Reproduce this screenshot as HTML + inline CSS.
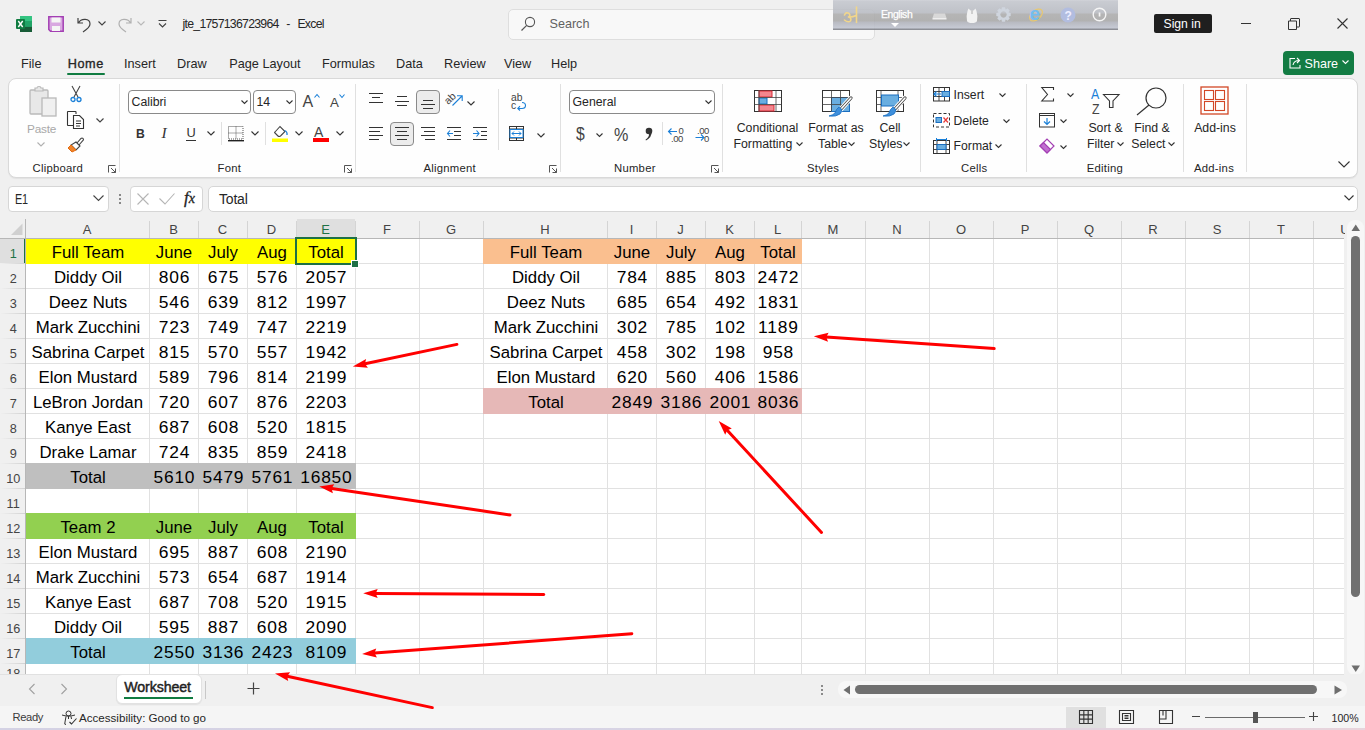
<!DOCTYPE html><html><head><meta charset="utf-8"><style>
html,body{margin:0;padding:0;}
body{width:1365px;height:730px;overflow:hidden;position:relative;background:#f0f0f0;font-family:"Liberation Sans", sans-serif;}
.t{position:absolute;white-space:pre;line-height:1;}
svg{overflow:visible}
</style></head><body>
<div style="position:absolute;left:26px;top:239px;width:1318px;height:435px;background:#fff"></div>
<div style="position:absolute;left:0px;top:219px;width:1344px;height:19px;background:#f0f0f0"></div>
<div style="position:absolute;left:0px;top:239px;width:25px;height:435px;background:#f0f0f0"></div>
<div style="position:absolute;left:149px;top:239px;width:1px;height:435px;background:#e1e1e1"></div>
<div style="position:absolute;left:198px;top:239px;width:1px;height:435px;background:#e1e1e1"></div>
<div style="position:absolute;left:247px;top:239px;width:1px;height:435px;background:#e1e1e1"></div>
<div style="position:absolute;left:296px;top:239px;width:1px;height:435px;background:#e1e1e1"></div>
<div style="position:absolute;left:355px;top:239px;width:1px;height:435px;background:#e1e1e1"></div>
<div style="position:absolute;left:419px;top:239px;width:1px;height:435px;background:#e1e1e1"></div>
<div style="position:absolute;left:483px;top:239px;width:1px;height:435px;background:#e1e1e1"></div>
<div style="position:absolute;left:607px;top:239px;width:1px;height:435px;background:#e1e1e1"></div>
<div style="position:absolute;left:656px;top:239px;width:1px;height:435px;background:#e1e1e1"></div>
<div style="position:absolute;left:705px;top:239px;width:1px;height:435px;background:#e1e1e1"></div>
<div style="position:absolute;left:754px;top:239px;width:1px;height:435px;background:#e1e1e1"></div>
<div style="position:absolute;left:801px;top:239px;width:1px;height:435px;background:#e1e1e1"></div>
<div style="position:absolute;left:865px;top:239px;width:1px;height:435px;background:#e1e1e1"></div>
<div style="position:absolute;left:929px;top:239px;width:1px;height:435px;background:#e1e1e1"></div>
<div style="position:absolute;left:993px;top:239px;width:1px;height:435px;background:#e1e1e1"></div>
<div style="position:absolute;left:1057px;top:239px;width:1px;height:435px;background:#e1e1e1"></div>
<div style="position:absolute;left:1121px;top:239px;width:1px;height:435px;background:#e1e1e1"></div>
<div style="position:absolute;left:1185px;top:239px;width:1px;height:435px;background:#e1e1e1"></div>
<div style="position:absolute;left:1249px;top:239px;width:1px;height:435px;background:#e1e1e1"></div>
<div style="position:absolute;left:1313px;top:239px;width:1px;height:435px;background:#e1e1e1"></div>
<div style="position:absolute;left:26px;top:263px;width:1318px;height:1px;background:#e1e1e1"></div>
<div style="position:absolute;left:26px;top:288px;width:1318px;height:1px;background:#e1e1e1"></div>
<div style="position:absolute;left:26px;top:313px;width:1318px;height:1px;background:#e1e1e1"></div>
<div style="position:absolute;left:26px;top:338px;width:1318px;height:1px;background:#e1e1e1"></div>
<div style="position:absolute;left:26px;top:363px;width:1318px;height:1px;background:#e1e1e1"></div>
<div style="position:absolute;left:26px;top:388px;width:1318px;height:1px;background:#e1e1e1"></div>
<div style="position:absolute;left:26px;top:413px;width:1318px;height:1px;background:#e1e1e1"></div>
<div style="position:absolute;left:26px;top:438px;width:1318px;height:1px;background:#e1e1e1"></div>
<div style="position:absolute;left:26px;top:463px;width:1318px;height:1px;background:#e1e1e1"></div>
<div style="position:absolute;left:26px;top:488px;width:1318px;height:1px;background:#e1e1e1"></div>
<div style="position:absolute;left:26px;top:513px;width:1318px;height:1px;background:#e1e1e1"></div>
<div style="position:absolute;left:26px;top:538px;width:1318px;height:1px;background:#e1e1e1"></div>
<div style="position:absolute;left:26px;top:563px;width:1318px;height:1px;background:#e1e1e1"></div>
<div style="position:absolute;left:26px;top:588px;width:1318px;height:1px;background:#e1e1e1"></div>
<div style="position:absolute;left:26px;top:613px;width:1318px;height:1px;background:#e1e1e1"></div>
<div style="position:absolute;left:26px;top:638px;width:1318px;height:1px;background:#e1e1e1"></div>
<div style="position:absolute;left:26px;top:663px;width:1318px;height:1px;background:#e1e1e1"></div>
<div style="position:absolute;left:25px;top:238px;width:331px;height:26px;background:#ffff00"></div>
<div style="position:absolute;left:25px;top:463px;width:331px;height:26px;background:#bfbfbf"></div>
<div style="position:absolute;left:25px;top:513px;width:331px;height:26px;background:#92d050"></div>
<div style="position:absolute;left:25px;top:638px;width:331px;height:26px;background:#92cddc"></div>
<div style="position:absolute;left:483px;top:238px;width:319px;height:26px;background:#fabf8f"></div>
<div style="position:absolute;left:483px;top:388px;width:319px;height:26px;background:#e6b8b7"></div>
<div style="position:absolute;left:149px;top:221px;width:1px;height:17px;background:#d4d4d4"></div>
<div style="position:absolute;left:198px;top:221px;width:1px;height:17px;background:#d4d4d4"></div>
<div style="position:absolute;left:247px;top:221px;width:1px;height:17px;background:#d4d4d4"></div>
<div style="position:absolute;left:296px;top:221px;width:1px;height:17px;background:#d4d4d4"></div>
<div style="position:absolute;left:355px;top:221px;width:1px;height:17px;background:#d4d4d4"></div>
<div style="position:absolute;left:419px;top:221px;width:1px;height:17px;background:#d4d4d4"></div>
<div style="position:absolute;left:483px;top:221px;width:1px;height:17px;background:#d4d4d4"></div>
<div style="position:absolute;left:607px;top:221px;width:1px;height:17px;background:#d4d4d4"></div>
<div style="position:absolute;left:656px;top:221px;width:1px;height:17px;background:#d4d4d4"></div>
<div style="position:absolute;left:705px;top:221px;width:1px;height:17px;background:#d4d4d4"></div>
<div style="position:absolute;left:754px;top:221px;width:1px;height:17px;background:#d4d4d4"></div>
<div style="position:absolute;left:801px;top:221px;width:1px;height:17px;background:#d4d4d4"></div>
<div style="position:absolute;left:865px;top:221px;width:1px;height:17px;background:#d4d4d4"></div>
<div style="position:absolute;left:929px;top:221px;width:1px;height:17px;background:#d4d4d4"></div>
<div style="position:absolute;left:993px;top:221px;width:1px;height:17px;background:#d4d4d4"></div>
<div style="position:absolute;left:1057px;top:221px;width:1px;height:17px;background:#d4d4d4"></div>
<div style="position:absolute;left:1121px;top:221px;width:1px;height:17px;background:#d4d4d4"></div>
<div style="position:absolute;left:1185px;top:221px;width:1px;height:17px;background:#d4d4d4"></div>
<div style="position:absolute;left:1249px;top:221px;width:1px;height:17px;background:#d4d4d4"></div>
<div style="position:absolute;left:1313px;top:221px;width:1px;height:17px;background:#d4d4d4"></div>
<div style="position:absolute;left:297px;top:219px;width:58px;height:19px;background:#dfdfdf"></div>
<div style="position:absolute;left:0px;top:239px;width:24px;height:24px;background:#dfdfdf"></div>
<div style="position:absolute;left:24px;top:239px;width:2px;height:25px;background:#1e7145"></div>
<div style="position:absolute;left:0px;top:238px;width:1344px;height:1px;background:#b7b7b7"></div>
<div style="position:absolute;left:25px;top:219px;width:1px;height:455px;background:#b7b7b7"></div>
<div style="position:absolute;left:0px;top:239px;width:25px;height:0px;"></div>
<div style="position:absolute;left:0px;top:263px;width:25px;height:1px;background:linear-gradient(to right,#f0f0f0,#d2d2d2)"></div>
<div style="position:absolute;left:0px;top:288px;width:25px;height:1px;background:linear-gradient(to right,#f0f0f0,#d2d2d2)"></div>
<div style="position:absolute;left:0px;top:313px;width:25px;height:1px;background:linear-gradient(to right,#f0f0f0,#d2d2d2)"></div>
<div style="position:absolute;left:0px;top:338px;width:25px;height:1px;background:linear-gradient(to right,#f0f0f0,#d2d2d2)"></div>
<div style="position:absolute;left:0px;top:363px;width:25px;height:1px;background:linear-gradient(to right,#f0f0f0,#d2d2d2)"></div>
<div style="position:absolute;left:0px;top:388px;width:25px;height:1px;background:linear-gradient(to right,#f0f0f0,#d2d2d2)"></div>
<div style="position:absolute;left:0px;top:413px;width:25px;height:1px;background:linear-gradient(to right,#f0f0f0,#d2d2d2)"></div>
<div style="position:absolute;left:0px;top:438px;width:25px;height:1px;background:linear-gradient(to right,#f0f0f0,#d2d2d2)"></div>
<div style="position:absolute;left:0px;top:463px;width:25px;height:1px;background:linear-gradient(to right,#f0f0f0,#d2d2d2)"></div>
<div style="position:absolute;left:0px;top:488px;width:25px;height:1px;background:linear-gradient(to right,#f0f0f0,#d2d2d2)"></div>
<div style="position:absolute;left:0px;top:513px;width:25px;height:1px;background:linear-gradient(to right,#f0f0f0,#d2d2d2)"></div>
<div style="position:absolute;left:0px;top:538px;width:25px;height:1px;background:linear-gradient(to right,#f0f0f0,#d2d2d2)"></div>
<div style="position:absolute;left:0px;top:563px;width:25px;height:1px;background:linear-gradient(to right,#f0f0f0,#d2d2d2)"></div>
<div style="position:absolute;left:0px;top:588px;width:25px;height:1px;background:linear-gradient(to right,#f0f0f0,#d2d2d2)"></div>
<div style="position:absolute;left:0px;top:613px;width:25px;height:1px;background:linear-gradient(to right,#f0f0f0,#d2d2d2)"></div>
<div style="position:absolute;left:0px;top:638px;width:25px;height:1px;background:linear-gradient(to right,#f0f0f0,#d2d2d2)"></div>
<div style="position:absolute;left:0px;top:663px;width:25px;height:1px;background:linear-gradient(to right,#f0f0f0,#d2d2d2)"></div>
<svg style="position:absolute;left:10px;top:223px;" width="13" height="13" viewBox="0 0 13 13"><path d="M12.5 0.5 L12.5 12 L1 12 Z" fill="#d0d0d0"/></svg>
<div class="t" style="left:-213.0px;width:600px;text-align:center;top:223.20px;font-size:13px;color:#444;font-weight:400;">A</div>
<div class="t" style="left:-126.5px;width:600px;text-align:center;top:223.20px;font-size:13px;color:#444;font-weight:400;">B</div>
<div class="t" style="left:-77.5px;width:600px;text-align:center;top:223.20px;font-size:13px;color:#444;font-weight:400;">C</div>
<div class="t" style="left:-28.5px;width:600px;text-align:center;top:223.20px;font-size:13px;color:#444;font-weight:400;">D</div>
<div class="t" style="left:25.5px;width:600px;text-align:center;top:223.20px;font-size:13px;color:#1e7145;font-weight:400;">E</div>
<div class="t" style="left:87.0px;width:600px;text-align:center;top:223.20px;font-size:13px;color:#444;font-weight:400;">F</div>
<div class="t" style="left:151.0px;width:600px;text-align:center;top:223.20px;font-size:13px;color:#444;font-weight:400;">G</div>
<div class="t" style="left:245.0px;width:600px;text-align:center;top:223.20px;font-size:13px;color:#444;font-weight:400;">H</div>
<div class="t" style="left:331.5px;width:600px;text-align:center;top:223.20px;font-size:13px;color:#444;font-weight:400;">I</div>
<div class="t" style="left:380.5px;width:600px;text-align:center;top:223.20px;font-size:13px;color:#444;font-weight:400;">J</div>
<div class="t" style="left:429.5px;width:600px;text-align:center;top:223.20px;font-size:13px;color:#444;font-weight:400;">K</div>
<div class="t" style="left:477.5px;width:600px;text-align:center;top:223.20px;font-size:13px;color:#444;font-weight:400;">L</div>
<div class="t" style="left:533.0px;width:600px;text-align:center;top:223.20px;font-size:13px;color:#444;font-weight:400;">M</div>
<div class="t" style="left:597.0px;width:600px;text-align:center;top:223.20px;font-size:13px;color:#444;font-weight:400;">N</div>
<div class="t" style="left:661.0px;width:600px;text-align:center;top:223.20px;font-size:13px;color:#444;font-weight:400;">O</div>
<div class="t" style="left:725.0px;width:600px;text-align:center;top:223.20px;font-size:13px;color:#444;font-weight:400;">P</div>
<div class="t" style="left:789.0px;width:600px;text-align:center;top:223.20px;font-size:13px;color:#444;font-weight:400;">Q</div>
<div class="t" style="left:853.0px;width:600px;text-align:center;top:223.20px;font-size:13px;color:#444;font-weight:400;">R</div>
<div class="t" style="left:917.0px;width:600px;text-align:center;top:223.20px;font-size:13px;color:#444;font-weight:400;">S</div>
<div class="t" style="left:981.0px;width:600px;text-align:center;top:223.20px;font-size:13px;color:#444;font-weight:400;">T</div>
<div class="t" style="left:1045.0px;width:600px;text-align:center;top:223.20px;font-size:13px;color:#444;font-weight:400;">U</div>
<div class="t" style="left:-286.8px;width:600px;text-align:center;top:247.75px;font-size:12.7px;color:#1e7145;font-weight:400;">1</div>
<div class="t" style="left:-286.8px;width:600px;text-align:center;top:272.75px;font-size:12.7px;color:#444;font-weight:400;">2</div>
<div class="t" style="left:-286.8px;width:600px;text-align:center;top:297.75px;font-size:12.7px;color:#444;font-weight:400;">3</div>
<div class="t" style="left:-286.8px;width:600px;text-align:center;top:322.75px;font-size:12.7px;color:#444;font-weight:400;">4</div>
<div class="t" style="left:-286.8px;width:600px;text-align:center;top:347.75px;font-size:12.7px;color:#444;font-weight:400;">5</div>
<div class="t" style="left:-286.8px;width:600px;text-align:center;top:372.75px;font-size:12.7px;color:#444;font-weight:400;">6</div>
<div class="t" style="left:-286.8px;width:600px;text-align:center;top:397.75px;font-size:12.7px;color:#444;font-weight:400;">7</div>
<div class="t" style="left:-286.8px;width:600px;text-align:center;top:422.75px;font-size:12.7px;color:#444;font-weight:400;">8</div>
<div class="t" style="left:-286.8px;width:600px;text-align:center;top:447.75px;font-size:12.7px;color:#444;font-weight:400;">9</div>
<div class="t" style="left:-286.8px;width:600px;text-align:center;top:472.75px;font-size:12.7px;color:#444;font-weight:400;">10</div>
<div class="t" style="left:-286.8px;width:600px;text-align:center;top:497.75px;font-size:12.7px;color:#444;font-weight:400;">11</div>
<div class="t" style="left:-286.8px;width:600px;text-align:center;top:522.75px;font-size:12.7px;color:#444;font-weight:400;">12</div>
<div class="t" style="left:-286.8px;width:600px;text-align:center;top:547.75px;font-size:12.7px;color:#444;font-weight:400;">13</div>
<div class="t" style="left:-286.8px;width:600px;text-align:center;top:572.75px;font-size:12.7px;color:#444;font-weight:400;">14</div>
<div class="t" style="left:-286.8px;width:600px;text-align:center;top:597.75px;font-size:12.7px;color:#444;font-weight:400;">15</div>
<div class="t" style="left:-286.8px;width:600px;text-align:center;top:622.75px;font-size:12.7px;color:#444;font-weight:400;">16</div>
<div class="t" style="left:-286.8px;width:600px;text-align:center;top:647.75px;font-size:12.7px;color:#444;font-weight:400;">17</div>
<div class="t" style="left:-286.8px;width:600px;text-align:center;top:668.25px;font-size:12.7px;color:#444;font-weight:400;">18</div>
<div class="t" style="left:-212.5px;width:600px;text-align:center;top:244.27px;font-size:17.4px;color:#000;font-weight:400;transform:scaleX(0.965);">Full Team</div>
<div class="t" style="left:-126.0px;width:600px;text-align:center;top:244.27px;font-size:17.4px;color:#000;font-weight:400;transform:scaleX(0.965);">June</div>
<div class="t" style="left:-77.0px;width:600px;text-align:center;top:244.27px;font-size:17.4px;color:#000;font-weight:400;transform:scaleX(0.965);">July</div>
<div class="t" style="left:-28.0px;width:600px;text-align:center;top:244.27px;font-size:17.4px;color:#000;font-weight:400;transform:scaleX(0.965);">Aug</div>
<div class="t" style="left:26.0px;width:600px;text-align:center;top:244.27px;font-size:17.4px;color:#000;font-weight:400;transform:scaleX(0.965);">Total</div>
<div class="t" style="left:-212.5px;width:600px;text-align:center;top:269.27px;font-size:17.4px;color:#000;font-weight:400;transform:scaleX(0.965);">Diddy Oil</div>
<div class="t" style="left:-125.6px;width:600px;text-align:center;top:269.27px;font-size:17.4px;color:#000;font-weight:400;letter-spacing:0.8px;">806</div>
<div class="t" style="left:-76.6px;width:600px;text-align:center;top:269.27px;font-size:17.4px;color:#000;font-weight:400;letter-spacing:0.8px;">675</div>
<div class="t" style="left:-27.600000000000023px;width:600px;text-align:center;top:269.27px;font-size:17.4px;color:#000;font-weight:400;letter-spacing:0.8px;">576</div>
<div class="t" style="left:26.399999999999977px;width:600px;text-align:center;top:269.27px;font-size:17.4px;color:#000;font-weight:400;letter-spacing:0.8px;">2057</div>
<div class="t" style="left:-212.5px;width:600px;text-align:center;top:294.27px;font-size:17.4px;color:#000;font-weight:400;transform:scaleX(0.965);">Deez Nuts</div>
<div class="t" style="left:-125.6px;width:600px;text-align:center;top:294.27px;font-size:17.4px;color:#000;font-weight:400;letter-spacing:0.8px;">546</div>
<div class="t" style="left:-76.6px;width:600px;text-align:center;top:294.27px;font-size:17.4px;color:#000;font-weight:400;letter-spacing:0.8px;">639</div>
<div class="t" style="left:-27.600000000000023px;width:600px;text-align:center;top:294.27px;font-size:17.4px;color:#000;font-weight:400;letter-spacing:0.8px;">812</div>
<div class="t" style="left:26.399999999999977px;width:600px;text-align:center;top:294.27px;font-size:17.4px;color:#000;font-weight:400;letter-spacing:0.8px;">1997</div>
<div class="t" style="left:-212.5px;width:600px;text-align:center;top:319.27px;font-size:17.4px;color:#000;font-weight:400;transform:scaleX(0.965);">Mark Zucchini</div>
<div class="t" style="left:-125.6px;width:600px;text-align:center;top:319.27px;font-size:17.4px;color:#000;font-weight:400;letter-spacing:0.8px;">723</div>
<div class="t" style="left:-76.6px;width:600px;text-align:center;top:319.27px;font-size:17.4px;color:#000;font-weight:400;letter-spacing:0.8px;">749</div>
<div class="t" style="left:-27.600000000000023px;width:600px;text-align:center;top:319.27px;font-size:17.4px;color:#000;font-weight:400;letter-spacing:0.8px;">747</div>
<div class="t" style="left:26.399999999999977px;width:600px;text-align:center;top:319.27px;font-size:17.4px;color:#000;font-weight:400;letter-spacing:0.8px;">2219</div>
<div class="t" style="left:-212.5px;width:600px;text-align:center;top:344.27px;font-size:17.4px;color:#000;font-weight:400;transform:scaleX(0.965);">Sabrina Carpet</div>
<div class="t" style="left:-125.6px;width:600px;text-align:center;top:344.27px;font-size:17.4px;color:#000;font-weight:400;letter-spacing:0.8px;">815</div>
<div class="t" style="left:-76.6px;width:600px;text-align:center;top:344.27px;font-size:17.4px;color:#000;font-weight:400;letter-spacing:0.8px;">570</div>
<div class="t" style="left:-27.600000000000023px;width:600px;text-align:center;top:344.27px;font-size:17.4px;color:#000;font-weight:400;letter-spacing:0.8px;">557</div>
<div class="t" style="left:26.399999999999977px;width:600px;text-align:center;top:344.27px;font-size:17.4px;color:#000;font-weight:400;letter-spacing:0.8px;">1942</div>
<div class="t" style="left:-212.5px;width:600px;text-align:center;top:369.27px;font-size:17.4px;color:#000;font-weight:400;transform:scaleX(0.965);">Elon Mustard</div>
<div class="t" style="left:-125.6px;width:600px;text-align:center;top:369.27px;font-size:17.4px;color:#000;font-weight:400;letter-spacing:0.8px;">589</div>
<div class="t" style="left:-76.6px;width:600px;text-align:center;top:369.27px;font-size:17.4px;color:#000;font-weight:400;letter-spacing:0.8px;">796</div>
<div class="t" style="left:-27.600000000000023px;width:600px;text-align:center;top:369.27px;font-size:17.4px;color:#000;font-weight:400;letter-spacing:0.8px;">814</div>
<div class="t" style="left:26.399999999999977px;width:600px;text-align:center;top:369.27px;font-size:17.4px;color:#000;font-weight:400;letter-spacing:0.8px;">2199</div>
<div class="t" style="left:-212.5px;width:600px;text-align:center;top:394.27px;font-size:17.4px;color:#000;font-weight:400;transform:scaleX(0.965);">LeBron Jordan</div>
<div class="t" style="left:-125.6px;width:600px;text-align:center;top:394.27px;font-size:17.4px;color:#000;font-weight:400;letter-spacing:0.8px;">720</div>
<div class="t" style="left:-76.6px;width:600px;text-align:center;top:394.27px;font-size:17.4px;color:#000;font-weight:400;letter-spacing:0.8px;">607</div>
<div class="t" style="left:-27.600000000000023px;width:600px;text-align:center;top:394.27px;font-size:17.4px;color:#000;font-weight:400;letter-spacing:0.8px;">876</div>
<div class="t" style="left:26.399999999999977px;width:600px;text-align:center;top:394.27px;font-size:17.4px;color:#000;font-weight:400;letter-spacing:0.8px;">2203</div>
<div class="t" style="left:-212.5px;width:600px;text-align:center;top:419.27px;font-size:17.4px;color:#000;font-weight:400;transform:scaleX(0.965);">Kanye East</div>
<div class="t" style="left:-125.6px;width:600px;text-align:center;top:419.27px;font-size:17.4px;color:#000;font-weight:400;letter-spacing:0.8px;">687</div>
<div class="t" style="left:-76.6px;width:600px;text-align:center;top:419.27px;font-size:17.4px;color:#000;font-weight:400;letter-spacing:0.8px;">608</div>
<div class="t" style="left:-27.600000000000023px;width:600px;text-align:center;top:419.27px;font-size:17.4px;color:#000;font-weight:400;letter-spacing:0.8px;">520</div>
<div class="t" style="left:26.399999999999977px;width:600px;text-align:center;top:419.27px;font-size:17.4px;color:#000;font-weight:400;letter-spacing:0.8px;">1815</div>
<div class="t" style="left:-212.5px;width:600px;text-align:center;top:444.27px;font-size:17.4px;color:#000;font-weight:400;transform:scaleX(0.965);">Drake Lamar</div>
<div class="t" style="left:-125.6px;width:600px;text-align:center;top:444.27px;font-size:17.4px;color:#000;font-weight:400;letter-spacing:0.8px;">724</div>
<div class="t" style="left:-76.6px;width:600px;text-align:center;top:444.27px;font-size:17.4px;color:#000;font-weight:400;letter-spacing:0.8px;">835</div>
<div class="t" style="left:-27.600000000000023px;width:600px;text-align:center;top:444.27px;font-size:17.4px;color:#000;font-weight:400;letter-spacing:0.8px;">859</div>
<div class="t" style="left:26.399999999999977px;width:600px;text-align:center;top:444.27px;font-size:17.4px;color:#000;font-weight:400;letter-spacing:0.8px;">2418</div>
<div class="t" style="left:-212.5px;width:600px;text-align:center;top:469.27px;font-size:17.4px;color:#000;font-weight:400;transform:scaleX(0.965);">Total</div>
<div class="t" style="left:-125.6px;width:600px;text-align:center;top:469.27px;font-size:17.4px;color:#000;font-weight:400;letter-spacing:0.8px;">5610</div>
<div class="t" style="left:-76.6px;width:600px;text-align:center;top:469.27px;font-size:17.4px;color:#000;font-weight:400;letter-spacing:0.8px;">5479</div>
<div class="t" style="left:-27.600000000000023px;width:600px;text-align:center;top:469.27px;font-size:17.4px;color:#000;font-weight:400;letter-spacing:0.8px;">5761</div>
<div class="t" style="left:26.399999999999977px;width:600px;text-align:center;top:469.27px;font-size:17.4px;color:#000;font-weight:400;letter-spacing:0.8px;">16850</div>
<div class="t" style="left:-212.5px;width:600px;text-align:center;top:519.27px;font-size:17.4px;color:#000;font-weight:400;transform:scaleX(0.965);">Team 2</div>
<div class="t" style="left:-126.0px;width:600px;text-align:center;top:519.27px;font-size:17.4px;color:#000;font-weight:400;transform:scaleX(0.965);">June</div>
<div class="t" style="left:-77.0px;width:600px;text-align:center;top:519.27px;font-size:17.4px;color:#000;font-weight:400;transform:scaleX(0.965);">July</div>
<div class="t" style="left:-28.0px;width:600px;text-align:center;top:519.27px;font-size:17.4px;color:#000;font-weight:400;transform:scaleX(0.965);">Aug</div>
<div class="t" style="left:26.0px;width:600px;text-align:center;top:519.27px;font-size:17.4px;color:#000;font-weight:400;transform:scaleX(0.965);">Total</div>
<div class="t" style="left:-212.5px;width:600px;text-align:center;top:544.27px;font-size:17.4px;color:#000;font-weight:400;transform:scaleX(0.965);">Elon Mustard</div>
<div class="t" style="left:-125.6px;width:600px;text-align:center;top:544.27px;font-size:17.4px;color:#000;font-weight:400;letter-spacing:0.8px;">695</div>
<div class="t" style="left:-76.6px;width:600px;text-align:center;top:544.27px;font-size:17.4px;color:#000;font-weight:400;letter-spacing:0.8px;">887</div>
<div class="t" style="left:-27.600000000000023px;width:600px;text-align:center;top:544.27px;font-size:17.4px;color:#000;font-weight:400;letter-spacing:0.8px;">608</div>
<div class="t" style="left:26.399999999999977px;width:600px;text-align:center;top:544.27px;font-size:17.4px;color:#000;font-weight:400;letter-spacing:0.8px;">2190</div>
<div class="t" style="left:-212.5px;width:600px;text-align:center;top:569.27px;font-size:17.4px;color:#000;font-weight:400;transform:scaleX(0.965);">Mark Zucchini</div>
<div class="t" style="left:-125.6px;width:600px;text-align:center;top:569.27px;font-size:17.4px;color:#000;font-weight:400;letter-spacing:0.8px;">573</div>
<div class="t" style="left:-76.6px;width:600px;text-align:center;top:569.27px;font-size:17.4px;color:#000;font-weight:400;letter-spacing:0.8px;">654</div>
<div class="t" style="left:-27.600000000000023px;width:600px;text-align:center;top:569.27px;font-size:17.4px;color:#000;font-weight:400;letter-spacing:0.8px;">687</div>
<div class="t" style="left:26.399999999999977px;width:600px;text-align:center;top:569.27px;font-size:17.4px;color:#000;font-weight:400;letter-spacing:0.8px;">1914</div>
<div class="t" style="left:-212.5px;width:600px;text-align:center;top:594.27px;font-size:17.4px;color:#000;font-weight:400;transform:scaleX(0.965);">Kanye East</div>
<div class="t" style="left:-125.6px;width:600px;text-align:center;top:594.27px;font-size:17.4px;color:#000;font-weight:400;letter-spacing:0.8px;">687</div>
<div class="t" style="left:-76.6px;width:600px;text-align:center;top:594.27px;font-size:17.4px;color:#000;font-weight:400;letter-spacing:0.8px;">708</div>
<div class="t" style="left:-27.600000000000023px;width:600px;text-align:center;top:594.27px;font-size:17.4px;color:#000;font-weight:400;letter-spacing:0.8px;">520</div>
<div class="t" style="left:26.399999999999977px;width:600px;text-align:center;top:594.27px;font-size:17.4px;color:#000;font-weight:400;letter-spacing:0.8px;">1915</div>
<div class="t" style="left:-212.5px;width:600px;text-align:center;top:619.27px;font-size:17.4px;color:#000;font-weight:400;transform:scaleX(0.965);">Diddy Oil</div>
<div class="t" style="left:-125.6px;width:600px;text-align:center;top:619.27px;font-size:17.4px;color:#000;font-weight:400;letter-spacing:0.8px;">595</div>
<div class="t" style="left:-76.6px;width:600px;text-align:center;top:619.27px;font-size:17.4px;color:#000;font-weight:400;letter-spacing:0.8px;">887</div>
<div class="t" style="left:-27.600000000000023px;width:600px;text-align:center;top:619.27px;font-size:17.4px;color:#000;font-weight:400;letter-spacing:0.8px;">608</div>
<div class="t" style="left:26.399999999999977px;width:600px;text-align:center;top:619.27px;font-size:17.4px;color:#000;font-weight:400;letter-spacing:0.8px;">2090</div>
<div class="t" style="left:-212.5px;width:600px;text-align:center;top:644.27px;font-size:17.4px;color:#000;font-weight:400;transform:scaleX(0.965);">Total</div>
<div class="t" style="left:-125.6px;width:600px;text-align:center;top:644.27px;font-size:17.4px;color:#000;font-weight:400;letter-spacing:0.8px;">2550</div>
<div class="t" style="left:-76.6px;width:600px;text-align:center;top:644.27px;font-size:17.4px;color:#000;font-weight:400;letter-spacing:0.8px;">3136</div>
<div class="t" style="left:-27.600000000000023px;width:600px;text-align:center;top:644.27px;font-size:17.4px;color:#000;font-weight:400;letter-spacing:0.8px;">2423</div>
<div class="t" style="left:26.399999999999977px;width:600px;text-align:center;top:644.27px;font-size:17.4px;color:#000;font-weight:400;letter-spacing:0.8px;">8109</div>
<div class="t" style="left:245.5px;width:600px;text-align:center;top:244.27px;font-size:17.4px;color:#000;font-weight:400;transform:scaleX(0.965);">Full Team</div>
<div class="t" style="left:332.0px;width:600px;text-align:center;top:244.27px;font-size:17.4px;color:#000;font-weight:400;transform:scaleX(0.965);">June</div>
<div class="t" style="left:381.0px;width:600px;text-align:center;top:244.27px;font-size:17.4px;color:#000;font-weight:400;transform:scaleX(0.965);">July</div>
<div class="t" style="left:430.0px;width:600px;text-align:center;top:244.27px;font-size:17.4px;color:#000;font-weight:400;transform:scaleX(0.965);">Aug</div>
<div class="t" style="left:478.0px;width:600px;text-align:center;top:244.27px;font-size:17.4px;color:#000;font-weight:400;transform:scaleX(0.965);">Total</div>
<div class="t" style="left:245.5px;width:600px;text-align:center;top:269.27px;font-size:17.4px;color:#000;font-weight:400;transform:scaleX(0.965);">Diddy Oil</div>
<div class="t" style="left:332.4px;width:600px;text-align:center;top:269.27px;font-size:17.4px;color:#000;font-weight:400;letter-spacing:0.8px;">784</div>
<div class="t" style="left:381.4px;width:600px;text-align:center;top:269.27px;font-size:17.4px;color:#000;font-weight:400;letter-spacing:0.8px;">885</div>
<div class="t" style="left:430.4px;width:600px;text-align:center;top:269.27px;font-size:17.4px;color:#000;font-weight:400;letter-spacing:0.8px;">803</div>
<div class="t" style="left:478.4px;width:600px;text-align:center;top:269.27px;font-size:17.4px;color:#000;font-weight:400;letter-spacing:0.8px;">2472</div>
<div class="t" style="left:245.5px;width:600px;text-align:center;top:294.27px;font-size:17.4px;color:#000;font-weight:400;transform:scaleX(0.965);">Deez Nuts</div>
<div class="t" style="left:332.4px;width:600px;text-align:center;top:294.27px;font-size:17.4px;color:#000;font-weight:400;letter-spacing:0.8px;">685</div>
<div class="t" style="left:381.4px;width:600px;text-align:center;top:294.27px;font-size:17.4px;color:#000;font-weight:400;letter-spacing:0.8px;">654</div>
<div class="t" style="left:430.4px;width:600px;text-align:center;top:294.27px;font-size:17.4px;color:#000;font-weight:400;letter-spacing:0.8px;">492</div>
<div class="t" style="left:478.4px;width:600px;text-align:center;top:294.27px;font-size:17.4px;color:#000;font-weight:400;letter-spacing:0.8px;">1831</div>
<div class="t" style="left:245.5px;width:600px;text-align:center;top:319.27px;font-size:17.4px;color:#000;font-weight:400;transform:scaleX(0.965);">Mark Zucchini</div>
<div class="t" style="left:332.4px;width:600px;text-align:center;top:319.27px;font-size:17.4px;color:#000;font-weight:400;letter-spacing:0.8px;">302</div>
<div class="t" style="left:381.4px;width:600px;text-align:center;top:319.27px;font-size:17.4px;color:#000;font-weight:400;letter-spacing:0.8px;">785</div>
<div class="t" style="left:430.4px;width:600px;text-align:center;top:319.27px;font-size:17.4px;color:#000;font-weight:400;letter-spacing:0.8px;">102</div>
<div class="t" style="left:478.4px;width:600px;text-align:center;top:319.27px;font-size:17.4px;color:#000;font-weight:400;letter-spacing:0.8px;">1189</div>
<div class="t" style="left:245.5px;width:600px;text-align:center;top:344.27px;font-size:17.4px;color:#000;font-weight:400;transform:scaleX(0.965);">Sabrina Carpet</div>
<div class="t" style="left:332.4px;width:600px;text-align:center;top:344.27px;font-size:17.4px;color:#000;font-weight:400;letter-spacing:0.8px;">458</div>
<div class="t" style="left:381.4px;width:600px;text-align:center;top:344.27px;font-size:17.4px;color:#000;font-weight:400;letter-spacing:0.8px;">302</div>
<div class="t" style="left:430.4px;width:600px;text-align:center;top:344.27px;font-size:17.4px;color:#000;font-weight:400;letter-spacing:0.8px;">198</div>
<div class="t" style="left:478.4px;width:600px;text-align:center;top:344.27px;font-size:17.4px;color:#000;font-weight:400;letter-spacing:0.8px;">958</div>
<div class="t" style="left:245.5px;width:600px;text-align:center;top:369.27px;font-size:17.4px;color:#000;font-weight:400;transform:scaleX(0.965);">Elon Mustard</div>
<div class="t" style="left:332.4px;width:600px;text-align:center;top:369.27px;font-size:17.4px;color:#000;font-weight:400;letter-spacing:0.8px;">620</div>
<div class="t" style="left:381.4px;width:600px;text-align:center;top:369.27px;font-size:17.4px;color:#000;font-weight:400;letter-spacing:0.8px;">560</div>
<div class="t" style="left:430.4px;width:600px;text-align:center;top:369.27px;font-size:17.4px;color:#000;font-weight:400;letter-spacing:0.8px;">406</div>
<div class="t" style="left:478.4px;width:600px;text-align:center;top:369.27px;font-size:17.4px;color:#000;font-weight:400;letter-spacing:0.8px;">1586</div>
<div class="t" style="left:245.5px;width:600px;text-align:center;top:394.27px;font-size:17.4px;color:#000;font-weight:400;transform:scaleX(0.965);">Total</div>
<div class="t" style="left:332.4px;width:600px;text-align:center;top:394.27px;font-size:17.4px;color:#000;font-weight:400;letter-spacing:0.8px;">2849</div>
<div class="t" style="left:381.4px;width:600px;text-align:center;top:394.27px;font-size:17.4px;color:#000;font-weight:400;letter-spacing:0.8px;">3186</div>
<div class="t" style="left:430.4px;width:600px;text-align:center;top:394.27px;font-size:17.4px;color:#000;font-weight:400;letter-spacing:0.8px;">2001</div>
<div class="t" style="left:478.4px;width:600px;text-align:center;top:394.27px;font-size:17.4px;color:#000;font-weight:400;letter-spacing:0.8px;">8036</div>
<div style="position:absolute;left:295px;top:237px;width:62px;height:28px;box-sizing:border-box;border:2px solid #1e7145"></div>
<div style="position:absolute;left:352px;top:261px;width:6px;height:6px;background:#1e7145;outline:1px solid #fff"></div>
<div style="position:absolute;left:1345px;top:219px;width:20px;height:456px;background:#f0f0f0"></div>
<div style="position:absolute;left:1347px;top:220px;width:17px;height:455px;background:#f7f7f7;border-radius:8px"></div>
<svg style="position:absolute;left:1351px;top:224px;" width="10" height="8" viewBox="0 0 10 8"><path d="M0.5 7 L4.75 0.5 L9 7 Z" fill="#6e6e6e"/></svg>
<div style="position:absolute;left:1351px;top:236px;width:9px;height:361px;background:#707070;border-radius:4.5px"></div>
<svg style="position:absolute;left:1351px;top:665px;" width="10" height="8" viewBox="0 0 10 8"><path d="M0.5 0.5 L9 0.5 L4.75 7 Z" fill="#6e6e6e"/></svg>
<div style="position:absolute;left:0px;top:674px;width:1365px;height:32px;background:#f0f0f0"></div>
<div style="position:absolute;left:0px;top:674px;width:1344px;height:1px;background:#e1e1e1"></div>
<svg style="position:absolute;left:28px;top:683px;" width="8" height="12" viewBox="0 0 8 12"><path d="M6.5 1 L1.5 6 L6.5 11" fill="none" stroke="#a0a0a0" stroke-width="1.1"/></svg>
<svg style="position:absolute;left:60px;top:683px;" width="8" height="12" viewBox="0 0 8 12"><path d="M1.5 1 L6.5 6 L1.5 11" fill="none" stroke="#a0a0a0" stroke-width="1.1"/></svg>
<div style="position:absolute;left:116px;top:674px;width:86px;height:30px;box-sizing:border-box;background:#fff;border-radius:6px;border:1px solid #e2e2e2;box-shadow:0 1px 1px rgba(0,0,0,0.06)"></div>
<div class="t" style="left:124.3px;top:680.28px;font-size:14.2px;color:#1f1f1f;font-weight:400;letter-spacing:-0.1px;-webkit-text-stroke:0.45px #1f1f1f;">Worksheet</div>
<div style="position:absolute;left:124px;top:697px;width:69px;height:2px;background:#107c41"></div>
<div style="position:absolute;left:205px;top:681px;width:1px;height:18px;background:#c8c8c8"></div>
<svg style="position:absolute;left:247px;top:682px;" width="13" height="13" viewBox="0 0 13 13"><path d="M6.5 0.5 V12.5 M0.5 6.5 H12.5" stroke="#444" stroke-width="1.2" fill="none"/></svg>
<div style="position:absolute;left:821px;top:685px;width:2px;height:2px;background:#8a8a8a"></div>
<div style="position:absolute;left:821px;top:689px;width:2px;height:2px;background:#8a8a8a"></div>
<div style="position:absolute;left:821px;top:693px;width:2px;height:2px;background:#8a8a8a"></div>
<div style="position:absolute;left:838px;top:681px;width:509px;height:17px;background:#f7f7f7;border-radius:8px"></div>
<svg style="position:absolute;left:843px;top:685px;" width="8" height="10" viewBox="0 0 8 10"><path d="M7 0.5 L7 9.5 L0.5 5 Z" fill="#6e6e6e"/></svg>
<div style="position:absolute;left:855px;top:685px;width:462px;height:9px;background:#707070;border-radius:4.5px"></div>
<svg style="position:absolute;left:1334px;top:685px;" width="9" height="10" viewBox="0 0 9 10"><path d="M0.5 0.5 L0.5 9.5 L8 5 Z" fill="#6e6e6e"/></svg>
<div style="position:absolute;left:0px;top:706px;width:1365px;height:22px;background:#f5f5f5"></div>
<div style="position:absolute;left:0px;top:728px;width:1365px;height:2px;background:linear-gradient(to right,#d4d2e4,#d8d4e4 50%,#e8d4dc)"></div>
<div class="t" style="left:12.5px;top:711.72px;font-size:11.2px;color:#3b3b3b;font-weight:400;letter-spacing:-0.35px;">Ready</div>
<svg style="position:absolute;left:61px;top:710px;" width="17" height="16" viewBox="0 0 17 16"><path d="M5 3.5 a2.5 2.5 0 1 1 5 0 a2.5 2.5 0 1 1 -5 0 M1 5 L5 6 L10 6 L14 5 M7.5 6 V9 M5 6.5 L4 12 Q3 15 5 14.5 M10 6.5 L10.5 9" fill="none" stroke="#333" stroke-width="1"/><path d="M8.5 12 L10.5 14 L15.5 8.5" fill="none" stroke="#333" stroke-width="1.1"/></svg>
<div class="t" style="left:79px;top:711.68px;font-size:11.6px;color:#262626;font-weight:400;">Accessibility: Good to go</div>
<div style="position:absolute;left:1066px;top:707px;width:40px;height:21px;background:#e0e0e0"></div>
<svg style="position:absolute;left:1079px;top:710px;" width="14" height="14" viewBox="0 0 14 14"><path d="M0.5 0.5 H13.5 V13.5 H0.5 Z M4.83 0.5 V13.5 M9.17 0.5 V13.5 M0.5 4.83 H13.5 M0.5 9.17 H13.5" fill="none" stroke="#333" stroke-width="1.1"/></svg>
<svg style="position:absolute;left:1119px;top:710px;" width="15" height="14" viewBox="0 0 15 14"><path d="M0.5 0.5 H14.5 V13.5 H0.5 Z M3.5 3.5 H11.5 V10.5 H3.5 Z M5.5 5.5 H9.5 M5.5 7 H9.5 M5.5 8.5 H9.5" fill="none" stroke="#333" stroke-width="1.1"/></svg>
<svg style="position:absolute;left:1159px;top:710px;" width="14" height="14" viewBox="0 0 14 14"><path d="M0.5 13.5 V0.5 H13.5 V13.5 Z M0.5 9 H7 V0.5 M4 0.5 V5.5" fill="none" stroke="#333" stroke-width="1.1"/></svg>
<div style="position:absolute;left:1192px;top:716px;width:8px;height:1px;background:#444"></div>
<div style="position:absolute;left:1205px;top:717px;width:100px;height:1px;background:#6a6a6a"></div>
<div style="position:absolute;left:1253px;top:712px;width:5px;height:11px;background:#555"></div>
<svg style="position:absolute;left:1309px;top:712px;" width="9" height="9" viewBox="0 0 9 9"><path d="M4.5 0 V9 M0 4.5 H9" stroke="#444" stroke-width="1.1" fill="none"/></svg>
<div class="t" style="left:1331.5px;top:712.53px;font-size:10.6px;color:#262626;font-weight:400;">100%</div>
<div style="position:absolute;left:8px;top:186px;width:101px;height:26px;box-sizing:border-box;background:#fff;border:1px solid #d6d6d6;border-radius:4px"></div>
<div class="t" style="left:15.2px;top:191.94px;font-size:14.6px;color:#262626;font-weight:400;letter-spacing:-0.3px;transform:scaleX(0.74);transform-origin:0 0;">E1</div>
<svg style="position:absolute;left:93px;top:195px;" width="11" height="7" viewBox="0 0 11 7"><path d="M0.5 0.5 L5.5 5.5 L10.5 0.5" fill="none" stroke="#444" stroke-width="1.1"/></svg>
<div style="position:absolute;left:119px;top:194px;width:2px;height:2px;background:#888"></div>
<div style="position:absolute;left:119px;top:198px;width:2px;height:2px;background:#888"></div>
<div style="position:absolute;left:119px;top:202px;width:2px;height:2px;background:#888"></div>
<div style="position:absolute;left:130px;top:186px;width:73px;height:26px;box-sizing:border-box;background:#fff;border:1px solid #d6d6d6;border-radius:4px"></div>
<svg style="position:absolute;left:137px;top:193px;" width="12" height="12" viewBox="0 0 12 12"><path d="M0.5 0.5 L11.5 11.5 M11.5 0.5 L0.5 11.5" stroke="#b5b5b5" stroke-width="1.1" fill="none"/></svg>
<svg style="position:absolute;left:159px;top:193px;" width="16" height="12" viewBox="0 0 16 12"><path d="M0.5 5.5 L6 11 L15.5 0.5" stroke="#b5b5b5" stroke-width="1.1" fill="none"/></svg>
<div class="t" style="left:184px;top:189px;font-family:'Liberation Serif',serif;font-style:italic;font-size:17px;color:#222;-webkit-text-stroke:0.3px #222">f<span style="font-size:14px">x</span></div>
<div style="position:absolute;left:208px;top:186px;width:1150px;height:26px;box-sizing:border-box;background:#fff;border:1px solid #d6d6d6;border-radius:5px"></div>
<div class="t" style="left:219px;top:192.35px;font-size:14px;color:#262626;font-weight:400;letter-spacing:-0.2px;">Total</div>
<svg style="position:absolute;left:1344px;top:195px;" width="10" height="6" viewBox="0 0 10 6"><path d="M0.5 0.5 L5 5 L9.5 0.5" fill="none" stroke="#333" stroke-width="1.1"/></svg>
<svg style="position:absolute;left:16px;top:16px;" width="16" height="16" viewBox="0 0 16 16"><rect x="4" y="0" width="12" height="16" rx="1" fill="#21a366"/><rect x="4" y="0" width="12" height="5.3" fill="#33c481" rx="1"/><rect x="4" y="10.7" width="12" height="5.3" fill="#185c37"/><rect x="4" y="5.3" width="12" height="5.4" fill="#21a366"/><rect x="0" y="3" width="9" height="10" rx="1" fill="#107c41"/><path d="M2.3 5 L6.7 11 M6.7 5 L2.3 11" stroke="#fff" stroke-width="1.4"/></svg>
<svg style="position:absolute;left:48px;top:16px;" width="16" height="16" viewBox="0 0 16 16"><path d="M0.8 0.8 H15.2 V15.2 H2.5 L0.8 13.5 Z" fill="#d9a8e1" stroke="#a33fb3" stroke-width="1.5"/><rect x="3.5" y="1.5" width="9" height="5" fill="#f5f5f5"/><rect x="4" y="10" width="8" height="5" fill="#f5f5f5"/></svg>
<svg style="position:absolute;left:77px;top:15px;" width="16" height="18" viewBox="0 0 16 18"><path d="M1 3 V8 H6 M1.5 8 C4 3 13 3 13 9 C13 12 10.5 14 6 17" fill="none" stroke="#424242" stroke-width="1.2"/></svg>
<svg style="position:absolute;left:98px;top:21px;" width="8" height="5" viewBox="0 0 8 5"><path d="M0.5 0.5 L4 4 L7.5 0.5" fill="none" stroke="#424242" stroke-width="1.1"/></svg>
<svg style="position:absolute;left:116px;top:15px;" width="16" height="18" viewBox="0 0 16 18"><path d="M15 3 V8 H10 M14.5 8 C12 3 3 3 3 9 C3 12 5.5 14 10 17" fill="none" stroke="#b0b0b0" stroke-width="1.2"/></svg>
<svg style="position:absolute;left:137px;top:21px;" width="8" height="5" viewBox="0 0 8 5"><path d="M0.5 0.5 L4 4 L7.5 0.5" fill="none" stroke="#b8b8b8" stroke-width="1.1"/></svg>
<svg style="position:absolute;left:158px;top:20px;" width="9" height="8" viewBox="0 0 9 8"><path d="M0.5 0.5 H8.5 M1 3.5 L4.5 7 L8 3.5" fill="none" stroke="#424242" stroke-width="1.1"/></svg>
<div class="t" style="left:182.6px;top:18.39px;font-size:12.3px;color:#262626;font-weight:400;letter-spacing:-0.75px;word-spacing:1.2px;">jte_1757136723964  -  Excel</div>
<div style="position:absolute;left:508px;top:9px;width:367px;height:31px;box-sizing:border-box;background:#f8f8f8;border:1px solid #dedede;border-radius:5px"></div>
<svg style="position:absolute;left:520px;top:16px;" width="16" height="16" viewBox="0 0 16 16"><circle cx="10" cy="6" r="4.6" fill="none" stroke="#555" stroke-width="1.1"/><path d="M6.7 9.3 L1.5 14.5" stroke="#555" stroke-width="1.2"/></svg>
<div class="t" style="left:549.5px;top:17.83px;font-size:12.6px;color:#616161;font-weight:400;">Search</div>
<div style="position:absolute;left:833px;top:0;width:285px;height:30px;background:linear-gradient(#d0d2d8 0px,#c4c7ce 1px,#b8bbc2 13px,#adadad 14px,#a9a9a9 21px,#b0b2ba 22px,#c0c4d0 28px,#80828a 29px,#80828a 30px);opacity:0.88"></div>
<svg style="position:absolute;left:843px;top:6px;" width="16" height="17" viewBox="0 0 16 17"><path d="M1.5 9 Q3 5.5 6 7.5 Q8 9.5 5.5 11 M5.5 11 Q9 12 7.5 15 Q5 17 1.5 14 M7 11 Q10 11 13 9.5 M13.5 1 V16.5" fill="none" stroke="#f2d68a" stroke-width="1.6" stroke-linecap="round"/></svg>
<div class="t" style="left:881px;top:9.50px;font-size:10.4px;color:#ffffff;font-weight:400;letter-spacing:-0.4px;-webkit-text-stroke:0.25px #fff;">English</div>
<svg style="position:absolute;left:891px;top:23px;" width="8" height="4" viewBox="0 0 8 4"><path d="M0 0 H8 L4 4 Z" fill="#fff"/></svg>
<svg style="position:absolute;left:932px;top:13px;" width="15" height="7" viewBox="0 0 15 7"><path d="M2 0.5 H13 L14.5 5 H0.5 Z" fill="#d8d8d8"/><rect x="0.5" y="5" width="14" height="1.5" fill="#eee"/></svg>
<svg style="position:absolute;left:966px;top:8px;" width="12" height="15" viewBox="0 0 12 15"><path d="M2.5 0.5 L4.5 2.5 H7.5 L9.5 0.5 L10.5 3 Q12 8 11 13 Q10 15 6 15 Q2 15 1 13 Q0 8 1.5 3 Z" fill="#f2f2f2"/><path d="M6 2.5 V6" stroke="#999" stroke-width="0.8"/></svg>
<svg style="position:absolute;left:996px;top:7px;" width="15" height="15" viewBox="0 0 15 15"><path d="M14.72 5.89 L14.72 9.11 L12.74 9.47 L12.60 9.81 L13.75 11.46 L11.46 13.75 L9.81 12.60 L9.47 12.74 L9.11 14.72 L5.89 14.72 L5.53 12.74 L5.19 12.60 L3.54 13.75 L1.25 11.46 L2.40 9.81 L2.26 9.47 L0.28 9.11 L0.28 5.89 L2.26 5.53 L2.40 5.19 L1.25 3.54 L3.54 1.25 L5.19 2.40 L5.53 2.26 L5.89 0.28 L9.11 0.28 L9.47 2.26 L9.81 2.40 L11.46 1.25 L13.75 3.54 L12.60 5.19 L12.74 5.53 Z M7.5 4.3 A3.2 3.2 0 1 0 7.51 4.3 Z" fill="#cfd5de" fill-rule="evenodd"/></svg>
<svg style="position:absolute;left:1028px;top:6px;" width="16" height="17" viewBox="0 0 16 17"><ellipse cx="8" cy="9" rx="7.5" ry="4.5" transform="rotate(-40 8 9)" fill="none" stroke="#e8c870" stroke-width="1.2"/><text x="1.5" y="14" font-size="19" font-weight="bold" font-family="Liberation Sans" fill="#72bdf0">e</text></svg>
<svg style="position:absolute;left:1060px;top:7px;" width="16" height="16" viewBox="0 0 16 16"><circle cx="8" cy="8" r="7.5" fill="#b2bde0"/><text x="4.5" y="12.5" font-size="12" font-weight="bold" font-family="Liberation Sans" fill="#eef">?</text></svg>
<svg style="position:absolute;left:1092px;top:7px;" width="15" height="15" viewBox="0 0 15 15"><circle cx="7.5" cy="7.5" r="6.3" fill="none" stroke="#f5f5f5" stroke-width="1.4"/><rect x="6.7" y="5.5" width="1.7" height="4" fill="#f5f5f5"/></svg>
<div style="position:absolute;left:1154px;top:14px;width:58px;height:19px;background:#1f1f1f;border-radius:2px"></div>
<div class="t" style="left:1163.5px;top:17.87px;font-size:12.2px;color:#ffffff;font-weight:400;">Sign in</div>
<div style="position:absolute;left:1241px;top:23px;width:10px;height:1px;background:#333"></div>
<svg style="position:absolute;left:1288px;top:18px;" width="12" height="12" viewBox="0 0 12 12"><path d="M0.5 3 H8.5 V11.5 H0.5 Z M2.5 3 V1 Q2.5 0.5 3 0.5 H11 Q11.5 0.5 11.5 1 V8.5 Q11.5 9 11 9 H8.5" fill="none" stroke="#333" stroke-width="1"/></svg>
<svg style="position:absolute;left:1337px;top:18px;" width="11" height="11" viewBox="0 0 11 11"><path d="M0.5 0.5 L10.5 10.5 M10.5 0.5 L0.5 10.5" stroke="#333" stroke-width="1.1"/></svg>
<div class="t" style="left:21px;top:57.55px;font-size:12.7px;color:#262626;font-weight:400;">File</div>
<div class="t" style="left:124px;top:57.55px;font-size:12.7px;color:#262626;font-weight:400;">Insert</div>
<div class="t" style="left:177px;top:57.55px;font-size:12.7px;color:#262626;font-weight:400;">Draw</div>
<div class="t" style="left:229.3px;top:57.55px;font-size:12.7px;color:#262626;font-weight:400;">Page Layout</div>
<div class="t" style="left:322px;top:57.55px;font-size:12.7px;color:#262626;font-weight:400;">Formulas</div>
<div class="t" style="left:396px;top:57.55px;font-size:12.7px;color:#262626;font-weight:400;">Data</div>
<div class="t" style="left:444px;top:57.55px;font-size:12.7px;color:#262626;font-weight:400;">Review</div>
<div class="t" style="left:504px;top:57.55px;font-size:12.7px;color:#262626;font-weight:400;">View</div>
<div class="t" style="left:551px;top:57.55px;font-size:12.7px;color:#262626;font-weight:400;">Help</div>
<div class="t" style="left:67.7px;top:57.55px;font-size:12.7px;color:#262626;font-weight:400;letter-spacing:0.6px;-webkit-text-stroke:0.35px #262626;">Home</div>
<div style="position:absolute;left:67px;top:73px;width:38px;height:2px;background:#107c41;border-radius:1px"></div>
<div style="position:absolute;left:1283px;top:51px;width:71px;height:24px;background:#137c43;border-radius:4px"></div>
<svg style="position:absolute;left:1289px;top:56px;" width="14" height="13" viewBox="0 0 14 13"><path d="M6 2.5 H1 V12 H11 V9" fill="none" stroke="#fff" stroke-width="1.1"/><path d="M4 9 Q5 4.5 10 4.5 M8 2 L10.5 4.5 L8 7" fill="none" stroke="#fff" stroke-width="1.1"/></svg>
<div class="t" style="left:1304.5px;top:57.53px;font-size:12.6px;color:#ffffff;font-weight:400;">Share</div>
<svg style="position:absolute;left:1342px;top:60px;" width="7" height="4" viewBox="0 0 7 4"><path d="M0.5 0.5 L3.5 3.5 L6.5 0.5" fill="none" stroke="#fff" stroke-width="1.1"/></svg>
<div style="position:absolute;left:8px;top:78px;width:1350px;height:100px;box-sizing:border-box;background:#fefefe;border:1px solid #d9d9d9;border-radius:8px;box-shadow:0 1px 1px rgba(0,0,0,0.06)"></div>
<div style="position:absolute;left:119px;top:84px;width:1px;height:88px;background:#e0e0e0"></div>
<div style="position:absolute;left:355px;top:84px;width:1px;height:88px;background:#e0e0e0"></div>
<div style="position:absolute;left:560px;top:84px;width:1px;height:88px;background:#e0e0e0"></div>
<div style="position:absolute;left:722px;top:84px;width:1px;height:88px;background:#e0e0e0"></div>
<div style="position:absolute;left:920px;top:84px;width:1px;height:88px;background:#e0e0e0"></div>
<div style="position:absolute;left:1026px;top:84px;width:1px;height:88px;background:#e0e0e0"></div>
<div style="position:absolute;left:1183px;top:84px;width:1px;height:88px;background:#e0e0e0"></div>
<div style="position:absolute;left:1246px;top:84px;width:1px;height:88px;background:#e0e0e0"></div>
<div style="position:absolute;left:221px;top:122px;width:1px;height:23px;background:#e0e0e0"></div>
<div style="position:absolute;left:265px;top:122px;width:1px;height:23px;background:#e0e0e0"></div>
<div style="position:absolute;left:498px;top:89px;width:1px;height:61px;background:#e0e0e0"></div>
<div style="position:absolute;left:662px;top:122px;width:1px;height:23px;background:#e0e0e0"></div>
<div class="t" style="left:32.5px;top:163.23px;font-size:11.3px;color:#262626;font-weight:400;letter-spacing:0.25px;">Clipboard</div>
<div class="t" style="left:217.6px;top:163.23px;font-size:11.3px;color:#262626;font-weight:400;letter-spacing:0.25px;">Font</div>
<div class="t" style="left:423.5px;top:163.23px;font-size:11.3px;color:#262626;font-weight:400;letter-spacing:0.25px;">Alignment</div>
<div class="t" style="left:614px;top:163.23px;font-size:11.3px;color:#262626;font-weight:400;letter-spacing:0.25px;">Number</div>
<div class="t" style="left:807px;top:163.23px;font-size:11.3px;color:#262626;font-weight:400;letter-spacing:0.25px;">Styles</div>
<div class="t" style="left:961px;top:163.23px;font-size:11.3px;color:#262626;font-weight:400;letter-spacing:0.25px;">Cells</div>
<div class="t" style="left:1086.7px;top:163.23px;font-size:11.3px;color:#262626;font-weight:400;letter-spacing:0.25px;">Editing</div>
<div class="t" style="left:1194px;top:163.23px;font-size:11.3px;color:#262626;font-weight:400;letter-spacing:0.25px;">Add-ins</div>
<svg style="position:absolute;left:108px;top:165px;" width="8" height="8" viewBox="0 0 8 8"><path d="M0.5 7.5 V0.5 H7.5 M3 3 L7.5 7.5 M7.5 3.5 V7.5 H3.5" fill="none" stroke="#555" stroke-width="1"/></svg>
<svg style="position:absolute;left:344px;top:165px;" width="8" height="8" viewBox="0 0 8 8"><path d="M0.5 7.5 V0.5 H7.5 M3 3 L7.5 7.5 M7.5 3.5 V7.5 H3.5" fill="none" stroke="#555" stroke-width="1"/></svg>
<svg style="position:absolute;left:549px;top:165px;" width="8" height="8" viewBox="0 0 8 8"><path d="M0.5 7.5 V0.5 H7.5 M3 3 L7.5 7.5 M7.5 3.5 V7.5 H3.5" fill="none" stroke="#555" stroke-width="1"/></svg>
<svg style="position:absolute;left:711px;top:165px;" width="8" height="8" viewBox="0 0 8 8"><path d="M0.5 7.5 V0.5 H7.5 M3 3 L7.5 7.5 M7.5 3.5 V7.5 H3.5" fill="none" stroke="#555" stroke-width="1"/></svg>
<svg style="position:absolute;left:29px;top:86px;" width="28" height="32" viewBox="0 0 28 32"><rect x="1" y="4" width="18" height="24" rx="1" fill="#e8e8e8" stroke="#b9b9b9" stroke-width="1.3"/><path d="M6 5 V2 H8 Q8 0.5 10 0.5 Q12 0.5 12 2 H14 V5 Z" fill="#e8e8e8" stroke="#b9b9b9" stroke-width="1.2"/><rect x="13" y="12" width="14" height="18" fill="#f0f0f0" stroke="#b9b9b9" stroke-width="1.3"/></svg>
<div class="t" style="left:27px;top:123.81px;font-size:11.8px;color:#a8a8a8;font-weight:400;letter-spacing:-0.2px;">Paste</div>
<svg style="position:absolute;left:37px;top:142px;" width="8" height="5" viewBox="0 0 8 5"><path d="M0.5 0.5 L4 4 L7.5 0.5" fill="none" stroke="#b0b0b0" stroke-width="1.1"/></svg>
<svg style="position:absolute;left:69px;top:86px;" width="14" height="17" viewBox="0 0 14 17"><path d="M3 0 L9 11 M11 0 L5 11" stroke="#444" stroke-width="1.1" fill="none"/><circle cx="4" cy="13.5" r="2" fill="none" stroke="#1b80d8" stroke-width="1.3"/><circle cx="10" cy="13.5" r="2" fill="none" stroke="#1b80d8" stroke-width="1.3"/></svg>
<svg style="position:absolute;left:67px;top:111px;" width="18" height="18" viewBox="0 0 18 18"><path d="M9 3 V1 Q9 0.5 8.5 0.5 H1 Q0.5 0.5 0.5 1 V14 Q0.5 14.5 1 14.5 H6" fill="none" stroke="#333" stroke-width="1.1"/><path d="M6.5 4.5 H12.5 L16.5 8.5 V17.5 H6.5 Z M9 10 H14 M9 12.5 H14 M9 15 H13" fill="none" stroke="#333" stroke-width="1.1"/></svg>
<svg style="position:absolute;left:96px;top:118px;" width="8" height="5" viewBox="0 0 8 5"><path d="M0.5 0.5 L4 4 L7.5 0.5" fill="none" stroke="#444" stroke-width="1.2"/></svg>
<svg style="position:absolute;left:67px;top:137px;" width="18" height="16" viewBox="0 0 18 16"><path d="M10 6 L14 1.5 Q15 0.5 16 1.5 Q17 2.5 16 3.5 L12 8" fill="#fff" stroke="#444" stroke-width="1.1"/><path d="M9 5 L13 9 L9 13 L4 8 Z" fill="#fff" stroke="#444" stroke-width="1.1"/><path d="M4 8 L1 11 L5 15 L9 13 Z" fill="#f0832a" stroke="#e26b10" stroke-width="1"/></svg>
<div style="position:absolute;left:128px;top:90px;width:123px;height:24px;box-sizing:border-box;background:#fff;border:1px solid #8a8a8a;border-radius:4px"></div>
<div class="t" style="left:131.5px;top:96.09px;font-size:12.3px;color:#262626;font-weight:400;">Calibri</div>
<svg style="position:absolute;left:241px;top:100px;" width="7" height="5" viewBox="0 0 7 5"><path d="M0.5 0.5 L3.5 3.5 L6.5 0.5" fill="none" stroke="#333" stroke-width="1.1"/></svg>
<div style="position:absolute;left:253px;top:90px;width:43px;height:24px;box-sizing:border-box;background:#fff;border:1px solid #8a8a8a;border-radius:4px"></div>
<div class="t" style="left:256.5px;top:96.09px;font-size:12.3px;color:#262626;font-weight:400;">14</div>
<svg style="position:absolute;left:285.5px;top:100px;" width="7" height="5" viewBox="0 0 7 5"><path d="M0.5 0.5 L3.5 3.5 L6.5 0.5" fill="none" stroke="#333" stroke-width="1.1"/></svg>
<div class="t" style="left:302.5px;top:93.96px;font-size:16px;color:#444;font-weight:400;">A</div>
<svg style="position:absolute;left:314px;top:94px;" width="6" height="4" viewBox="0 0 6 4"><path d="M0.5 3.5 L3 0.5 L5.5 3.5" fill="none" stroke="#1b80d8" stroke-width="1.1"/></svg>
<div class="t" style="left:330px;top:96.24px;font-size:13.3px;color:#444;font-weight:400;">A</div>
<svg style="position:absolute;left:339px;top:94px;" width="6" height="4" viewBox="0 0 6 4"><path d="M0.5 0.5 L3 3.5 L5.5 0.5" fill="none" stroke="#1b80d8" stroke-width="1.1"/></svg>
<div class="t" style="left:136px;top:126.87px;font-size:13.5px;color:#333;font-weight:700;transform:scaleX(0.9);transform-origin:0 0;">B</div>
<div class="t" style="left:161.5px;top:124.5px;font-size:15.5px;color:#333;font-family:'Liberation Serif',serif;font-style:italic">I</div>
<div class="t" style="left:186.5px;top:126.66px;font-size:12.8px;color:#333;font-weight:400;">U</div>
<div style="position:absolute;left:186px;top:140px;width:10px;height:1px;background:#333"></div>
<svg style="position:absolute;left:206.5px;top:131px;" width="8" height="5" viewBox="0 0 8 5"><path d="M0.5 0.5 L4 4 L7.5 0.5" fill="none" stroke="#333" stroke-width="1.1"/></svg>
<svg style="position:absolute;left:228px;top:126px;" width="16" height="16" viewBox="0 0 16 16"><path d="M0.5 0.5 H15 V13 H0.5 Z M8 0.5 V13 M0.5 7 H15" fill="none" stroke="#555" stroke-width="1" stroke-dasharray="1 1"/><rect x="0" y="14" width="16" height="1.4" fill="#222"/></svg>
<svg style="position:absolute;left:250.5px;top:131px;" width="8" height="5" viewBox="0 0 8 5"><path d="M0.5 0.5 L4 4 L7.5 0.5" fill="none" stroke="#333" stroke-width="1.1"/></svg>
<svg style="position:absolute;left:272px;top:125px;" width="17" height="18" viewBox="0 0 17 18"><path d="M3 7 L8 1.5 L13 6.5 L8.5 11 Q7 12 6 11 L3 8 Q2 7 3 7 Z" fill="#fff" stroke="#444" stroke-width="1.1"/><path d="M12.5 5.5 Q15.5 6.5 15 10" fill="none" stroke="#1b80d8" stroke-width="1.3"/><rect x="0" y="13.5" width="16" height="3.5" fill="#ffff00"/></svg>
<svg style="position:absolute;left:294.5px;top:131px;" width="8" height="5" viewBox="0 0 8 5"><path d="M0.5 0.5 L4 4 L7.5 0.5" fill="none" stroke="#333" stroke-width="1.1"/></svg>
<div class="t" style="left:314px;top:125.15px;font-size:14px;color:#444;font-weight:400;">A</div>
<div style="position:absolute;left:313px;top:138px;width:16px;height:4px;background:#ff0000"></div>
<svg style="position:absolute;left:335.5px;top:131px;" width="8" height="5" viewBox="0 0 8 5"><path d="M0.5 0.5 L4 4 L7.5 0.5" fill="none" stroke="#333" stroke-width="1.1"/></svg>
<svg style="position:absolute;left:369px;top:93px;" width="14" height="11" viewBox="0 0 14 11"><path d="M0 0.5 H14 M3 4.5 H11 M0 9.5 H14 " fill="none" stroke="#333" stroke-width="1.1"/></svg>
<svg style="position:absolute;left:395px;top:96px;" width="14" height="11" viewBox="0 0 14 11"><path d="M2 0.5 H12 M0 5.5 H14 M2 9.5 H12 " fill="none" stroke="#333" stroke-width="1.1"/></svg>
<div style="position:absolute;left:416px;top:90px;width:24px;height:24px;box-sizing:border-box;background:#ececec;border:1px solid #8a8a8a;border-radius:4px"></div>
<svg style="position:absolute;left:421px;top:100px;" width="14" height="10.5" viewBox="0 0 14 10.5"><path d="M2 0.5 H12 M0 4.5 H14 M2 8.5 H12 " fill="none" stroke="#333" stroke-width="1.1"/></svg>
<div class="t" style="left:444px;top:93px;font-size:10.5px;color:#444;transform:rotate(-45deg);transform-origin:50% 50%">ab</div>
<svg style="position:absolute;left:452px;top:95px;" width="11" height="11" viewBox="0 0 11 11"><path d="M0.5 10.5 L10 1 M5 0.8 H10.2 V6" fill="none" stroke="#1b80d8" stroke-width="1.1"/></svg>
<svg style="position:absolute;left:467px;top:101px;" width="8" height="5" viewBox="0 0 8 5"><path d="M0.5 0.5 L4 4 L7.5 0.5" fill="none" stroke="#333" stroke-width="1.1"/></svg>
<svg style="position:absolute;left:369px;top:127px;" width="14" height="14.5" viewBox="0 0 14 14.5"><path d="M0 0.5 H14 M0 4.5 H11 M0 8.5 H14 M0 12.5 H10 " fill="none" stroke="#333" stroke-width="1.1"/></svg>
<div style="position:absolute;left:390px;top:122px;width:24px;height:24px;box-sizing:border-box;background:#ececec;border:1px solid #8a8a8a;border-radius:4px"></div>
<svg style="position:absolute;left:395px;top:127px;" width="14" height="14.5" viewBox="0 0 14 14.5"><path d="M0 0.5 H14 M2 4.5 H12 M0 8.5 H14 M2 12.5 H12 " fill="none" stroke="#333" stroke-width="1.1"/></svg>
<svg style="position:absolute;left:421px;top:127px;" width="14" height="14.5" viewBox="0 0 14 14.5"><path d="M0 0.5 H14 M3 4.5 H14 M0 8.5 H14 M4 12.5 H14 " fill="none" stroke="#333" stroke-width="1.1"/></svg>
<svg style="position:absolute;left:447px;top:127px;" width="14" height="14" viewBox="0 0 14 14"><path d="M0 0.5 H14 M7 4.5 H14 M7 8.5 H14 M0 12.5 H14" fill="none" stroke="#333" stroke-width="1.1"/><path d="M0.5 6.5 H6 M3 3.5 L0.5 6.5 L3 9.5" fill="none" stroke="#1b80d8" stroke-width="1.1"/></svg>
<svg style="position:absolute;left:473px;top:127px;" width="14" height="14" viewBox="0 0 14 14"><path d="M0 0.5 H14 M8 4.5 H14 M8 8.5 H14 M0 12.5 H14" fill="none" stroke="#333" stroke-width="1.1"/><path d="M0 6.5 H6 M3.5 3.5 L6 6.5 L3.5 9.5" fill="none" stroke="#1b80d8" stroke-width="1.1"/></svg>
<div class="t" style="left:511px;top:92.78px;font-size:10.3px;color:#444;font-weight:400;">ab</div>
<div class="t" style="left:511px;top:101.08px;font-size:10.3px;color:#444;font-weight:400;">c</div>
<svg style="position:absolute;left:517px;top:102px;" width="9" height="8" viewBox="0 0 9 8"><path d="M5 0.5 Q8.5 0.5 8.5 3.5 Q8.5 6.5 5 6.5 H0.8 M3 4.2 L0.8 6.5 L3 8.5" fill="none" stroke="#1b80d8" stroke-width="1.1"/></svg>
<svg style="position:absolute;left:509px;top:126px;" width="16" height="16" viewBox="0 0 16 16"><rect x="0.5" y="0.5" width="14" height="14" fill="none" stroke="#333" stroke-width="1"/><path d="M0.5 3 H14.5 M0.5 12 H14.5 M7.5 0.5 V3 M7.5 12 V14.5" stroke="#333" stroke-width="1"/><rect x="1" y="3.5" width="13" height="8" fill="#fff" stroke="#1b80d8" stroke-width="1"/><path d="M3 7.5 H12 M5 5.5 L3 7.5 L5 9.5 M10 5.5 L12 7.5 L10 9.5" fill="none" stroke="#1b80d8" stroke-width="1"/></svg>
<svg style="position:absolute;left:536.5px;top:133px;" width="8" height="5" viewBox="0 0 8 5"><path d="M0.5 0.5 L4 4 L7.5 0.5" fill="none" stroke="#333" stroke-width="1.1"/></svg>
<div style="position:absolute;left:569px;top:90px;width:146px;height:24px;box-sizing:border-box;background:#fff;border:1px solid #8a8a8a;border-radius:4px"></div>
<div class="t" style="left:572.5px;top:96.09px;font-size:12.3px;color:#262626;font-weight:400;">General</div>
<svg style="position:absolute;left:704.5px;top:100px;" width="7" height="5" viewBox="0 0 7 5"><path d="M0.5 0.5 L3.5 3.5 L6.5 0.5" fill="none" stroke="#333" stroke-width="1.1"/></svg>
<div class="t" style="left:576px;top:124.84px;font-size:18.5px;color:#444;font-weight:400;transform:scaleX(0.85);transform-origin:0 0;">$</div>
<svg style="position:absolute;left:596px;top:133px;" width="7" height="4" viewBox="0 0 7 4"><path d="M0.5 0.5 L3.5 3.5 L6.5 0.5" fill="none" stroke="#333" stroke-width="1.1"/></svg>
<div class="t" style="left:613.5px;top:124.92px;font-size:19px;color:#444;font-weight:400;transform:scaleX(0.85);transform-origin:0 0;">%</div>
<svg style="position:absolute;left:644px;top:127px;" width="9" height="14" viewBox="0 0 9 14"><circle cx="5" cy="4" r="3.3" fill="#333"/><path d="M7.6 5 Q8 10 2 13.5 L1.5 12.8 Q5.5 10 5 6.5 Z" fill="#333"/></svg>
<svg style="position:absolute;left:668px;top:128px;" width="10" height="8" viewBox="0 0 10 8"><path d="M0.5 3.5 H9 M3.5 0.5 L0.5 3.5 L3.5 6.5" fill="none" stroke="#1b80d8" stroke-width="1.1"/></svg>
<div class="t" style="left:678.5px;top:126.46px;font-size:9.5px;color:#444;font-weight:400;">0</div>
<div class="t" style="left:671px;top:133.96px;font-size:9.5px;color:#444;font-weight:400;letter-spacing:-0.5px;">.00</div>
<div class="t" style="left:697px;top:126.46px;font-size:9.5px;color:#444;font-weight:400;letter-spacing:-0.5px;">.00</div>
<svg style="position:absolute;left:695px;top:134px;" width="10" height="8" viewBox="0 0 10 8"><path d="M0.5 3.5 H9 M6 0.5 L9 3.5 L6 6.5" fill="none" stroke="#1b80d8" stroke-width="1.1"/></svg>
<div class="t" style="left:704px;top:133.96px;font-size:9.5px;color:#444;font-weight:400;">0</div>
<svg style="position:absolute;left:754px;top:90px;" width="28" height="22" viewBox="0 0 28 22"><rect x="0.5" y="0.5" width="27" height="21" fill="#fff" stroke="#333" stroke-width="1"/><rect x="5" y="1" width="13" height="6" fill="#f4868e" stroke="#d82a36" stroke-width="1"/><rect x="5" y="8" width="8" height="6" fill="#6aaee0" stroke="#1b6ec0" stroke-width="1"/><rect x="5" y="15" width="15" height="6" fill="#f4868e" stroke="#d82a36" stroke-width="1"/><path d="M0.5 7.5 H27.5 M0.5 14.5 H27.5 M5 0.5 V21.5 M22 0.5 V21.5" stroke="#444" stroke-width="0.8" fill="none"/></svg>
<div class="t" style="left:467.5px;width:600px;text-align:center;top:121.59px;font-size:12.3px;color:#262626;font-weight:400;">Conditional</div>
<div class="t" style="left:733.5px;top:138.09px;font-size:12.3px;color:#262626;font-weight:400;">Formatting</div>
<svg style="position:absolute;left:795.5px;top:142px;" width="7" height="4" viewBox="0 0 7 4"><path d="M0.5 0.5 L3.5 3.5 L6.5 0.5" fill="none" stroke="#333" stroke-width="1.1"/></svg>
<svg style="position:absolute;left:822px;top:90px;" width="31" height="27" viewBox="0 0 31 27"><rect x="0.5" y="0.5" width="27" height="21" fill="#fff" stroke="#333" stroke-width="1"/><rect x="9.5" y="7.5" width="18" height="14" fill="#6aaee0" stroke="#1b6ec0" stroke-width="1"/><path d="M0.5 7.5 H27.5 M0.5 14.5 H27.5 M9.5 0.5 V21.5 M18.5 0.5 V21.5" stroke="#444" stroke-width="0.8" fill="none"/><path d="M29 8 L19 19" stroke="#fff" stroke-width="5" stroke-linecap="round"/><path d="M29 8 L19 19" stroke="#444" stroke-width="3.2" stroke-linecap="round"/><path d="M29 8 L19 19" stroke="#fff" stroke-width="1.6" stroke-linecap="round"/><path d="M17 17 Q14 19 13 23 Q11 25 7 26 Q14 27 18 24 Q20 22 19.5 19 Z" fill="#3d8fdc" stroke="#1b6ec0" stroke-width="0.8"/></svg>
<div class="t" style="left:536px;width:600px;text-align:center;top:121.59px;font-size:12.3px;color:#262626;font-weight:400;">Format as</div>
<div class="t" style="left:818px;top:138.09px;font-size:12.3px;color:#262626;font-weight:400;">Table</div>
<svg style="position:absolute;left:847.5px;top:142px;" width="7" height="4" viewBox="0 0 7 4"><path d="M0.5 0.5 L3.5 3.5 L6.5 0.5" fill="none" stroke="#333" stroke-width="1.1"/></svg>
<svg style="position:absolute;left:876px;top:90px;" width="31" height="27" viewBox="0 0 31 27"><rect x="0.5" y="0.5" width="27" height="21" fill="#fff" stroke="#333" stroke-width="1"/><path d="M0.5 7.5 H27.5 M0.5 14.5 H27.5 M5 0.5 V21.5 M22 0.5 V21.5" stroke="#444" stroke-width="0.8" fill="none"/><rect x="5.5" y="5" width="17" height="11" fill="#6aaee0" stroke="#1b6ec0" stroke-width="1"/><path d="M29 8 L19 19" stroke="#fff" stroke-width="5" stroke-linecap="round"/><path d="M29 8 L19 19" stroke="#444" stroke-width="3.2" stroke-linecap="round"/><path d="M29 8 L19 19" stroke="#fff" stroke-width="1.6" stroke-linecap="round"/><path d="M17 17 Q14 19 13 23 Q11 25 7 26 Q14 27 18 24 Q20 22 19.5 19 Z" fill="#3d8fdc" stroke="#1b6ec0" stroke-width="0.8"/></svg>
<div class="t" style="left:590px;width:600px;text-align:center;top:121.59px;font-size:12.3px;color:#262626;font-weight:400;">Cell</div>
<div class="t" style="left:869px;top:138.09px;font-size:12.3px;color:#262626;font-weight:400;">Styles</div>
<svg style="position:absolute;left:903px;top:142px;" width="7" height="4" viewBox="0 0 7 4"><path d="M0.5 0.5 L3.5 3.5 L6.5 0.5" fill="none" stroke="#333" stroke-width="1.1"/></svg>
<svg style="position:absolute;left:933px;top:87px;" width="17" height="15" viewBox="0 0 17 15"><rect x="0.5" y="0.5" width="16" height="13.5" fill="#fff" stroke="#333" stroke-width="1"/><path d="M0.5 4.5 H16.5 M0.5 9.5 H16.5 M6 0.5 V14 M11.5 0.5 V14" stroke="#333" stroke-width="0.9"/><rect x="9" y="4.5" width="7.5" height="5" fill="#6aaee0" stroke="#1b6ec0" stroke-width="1"/><path d="M1 7 H8 M3.5 4.5 L1 7 L3.5 9.5" fill="none" stroke="#1b80d8" stroke-width="1.2"/></svg>
<div class="t" style="left:953.6px;top:89.17px;font-size:12.2px;color:#262626;font-weight:400;">Insert</div>
<svg style="position:absolute;left:998.5px;top:93px;" width="7" height="4" viewBox="0 0 7 4"><path d="M0.5 0.5 L3.5 3.5 L6.5 0.5" fill="none" stroke="#333" stroke-width="1.1"/></svg>
<svg style="position:absolute;left:933px;top:113px;" width="17" height="15" viewBox="0 0 17 15"><rect x="0.5" y="0.5" width="16" height="13.5" fill="#fff" stroke="#333" stroke-width="1" stroke-dasharray="3 2"/><rect x="3" y="4.5" width="5.5" height="5" fill="#6aaee0" stroke="#1b6ec0" stroke-width="1"/><path d="M10.5 4.5 L15 9.5 M15 4.5 L10.5 9.5" stroke="#e83a3a" stroke-width="1.2"/></svg>
<div class="t" style="left:953.6px;top:114.67px;font-size:12.2px;color:#262626;font-weight:400;">Delete</div>
<svg style="position:absolute;left:1002.5px;top:119px;" width="7" height="4" viewBox="0 0 7 4"><path d="M0.5 0.5 L3.5 3.5 L6.5 0.5" fill="none" stroke="#333" stroke-width="1.1"/></svg>
<svg style="position:absolute;left:933px;top:138px;" width="17" height="16" viewBox="0 0 17 16"><rect x="0.5" y="2.5" width="16" height="13" fill="#fff" stroke="#333" stroke-width="1"/><path d="M0.5 6.5 H16.5 M0.5 11.5 H16.5 M4 2.5 V15.5 M13 2.5 V15.5" stroke="#333" stroke-width="0.9"/><rect x="4" y="6.5" width="9" height="5" fill="#6aaee0" stroke="#1b6ec0" stroke-width="1"/><path d="M3.5 1.5 H13.5 M3.5 0 V3 M13.5 0 V3" stroke="#1b80d8" stroke-width="1" fill="none"/></svg>
<div class="t" style="left:953.6px;top:140.17px;font-size:12.2px;color:#262626;font-weight:400;">Format</div>
<svg style="position:absolute;left:994.5px;top:144px;" width="7" height="4" viewBox="0 0 7 4"><path d="M0.5 0.5 L3.5 3.5 L6.5 0.5" fill="none" stroke="#333" stroke-width="1.1"/></svg>
<svg style="position:absolute;left:1041px;top:87px;" width="13" height="15" viewBox="0 0 13 15"><path d="M12.5 3 V0.5 H0.8 L6.5 7.5 L0.8 14 H12.5 V11.5" fill="none" stroke="#333" stroke-width="1.1"/></svg>
<svg style="position:absolute;left:1066.5px;top:93px;" width="7" height="4" viewBox="0 0 7 4"><path d="M0.5 0.5 L3.5 3.5 L6.5 0.5" fill="none" stroke="#333" stroke-width="1.1"/></svg>
<svg style="position:absolute;left:1039px;top:113px;" width="16" height="15" viewBox="0 0 16 15"><rect x="0.5" y="0.5" width="15" height="13.5" fill="#fff" stroke="#333" stroke-width="1"/><path d="M0.5 2.5 H15.5" stroke="#333" stroke-width="1"/><path d="M8 5 V11.5 M5 8.5 L8 11.5 L11 8.5" fill="none" stroke="#1b80d8" stroke-width="1.2"/></svg>
<svg style="position:absolute;left:1059.5px;top:119px;" width="7" height="4" viewBox="0 0 7 4"><path d="M0.5 0.5 L3.5 3.5 L6.5 0.5" fill="none" stroke="#333" stroke-width="1.1"/></svg>
<svg style="position:absolute;left:1039px;top:138px;" width="16" height="16" viewBox="0 0 16 16"><path d="M1 8 L8 1 L15 8 L8 15 Z" fill="#fff" stroke="#a33fb3" stroke-width="1.2"/><path d="M1 8 L4.5 4.5 L11.5 11.5 L8 15 Z" fill="#c06fd0" stroke="#a33fb3" stroke-width="1.2"/></svg>
<svg style="position:absolute;left:1059.5px;top:145px;" width="7" height="4" viewBox="0 0 7 4"><path d="M0.5 0.5 L3.5 3.5 L6.5 0.5" fill="none" stroke="#333" stroke-width="1.1"/></svg>
<div class="t" style="left:1091px;top:86.48px;font-size:15.5px;color:#1b80d8;font-weight:400;transform:scaleX(0.8);transform-origin:0 0;">A</div>
<div class="t" style="left:1091.5px;top:101.48px;font-size:15.5px;color:#444;font-weight:400;transform:scaleX(0.8);transform-origin:0 0;">Z</div>
<svg style="position:absolute;left:1103px;top:94px;" width="17" height="14" viewBox="0 0 17 14"><path d="M0.5 0.5 H16 L10 7 V13.5 H6.5 V7 Z" fill="none" stroke="#333" stroke-width="1.1"/></svg>
<div class="t" style="left:805.5px;width:600px;text-align:center;top:122.09px;font-size:12.3px;color:#262626;font-weight:400;">Sort &amp;</div>
<div class="t" style="left:1087px;top:138.09px;font-size:12.3px;color:#262626;font-weight:400;">Filter</div>
<svg style="position:absolute;left:1117px;top:142px;" width="7" height="4" viewBox="0 0 7 4"><path d="M0.5 0.5 L3.5 3.5 L6.5 0.5" fill="none" stroke="#333" stroke-width="1.1"/></svg>
<svg style="position:absolute;left:1136px;top:87px;" width="31" height="29" viewBox="0 0 31 29"><circle cx="20" cy="11" r="10" fill="none" stroke="#333" stroke-width="1.2"/><path d="M13 18 L1 28" stroke="#333" stroke-width="1.2"/></svg>
<div class="t" style="left:852px;width:600px;text-align:center;top:122.09px;font-size:12.3px;color:#262626;font-weight:400;">Find &amp;</div>
<div class="t" style="left:1131.3px;top:138.09px;font-size:12.3px;color:#262626;font-weight:400;">Select</div>
<svg style="position:absolute;left:1167.5px;top:142px;" width="7" height="4" viewBox="0 0 7 4"><path d="M0.5 0.5 L3.5 3.5 L6.5 0.5" fill="none" stroke="#333" stroke-width="1.1"/></svg>
<svg style="position:absolute;left:1200px;top:86px;" width="30" height="30" viewBox="0 0 30 30"><rect x="1" y="1" width="27" height="27" fill="none" stroke="#d24726" stroke-width="1.3"/><rect x="4.5" y="4.5" width="9" height="9" fill="none" stroke="#d24726" stroke-width="1.1"/><rect x="15.5" y="4.5" width="9" height="9" fill="none" stroke="#d24726" stroke-width="1.1"/><rect x="4.5" y="15.5" width="9" height="9" fill="none" stroke="#d24726" stroke-width="1.1"/><rect x="15.5" y="15.5" width="9" height="9" fill="none" stroke="#d24726" stroke-width="1.1"/></svg>
<div class="t" style="left:915px;width:600px;text-align:center;top:122.09px;font-size:12.3px;color:#262626;font-weight:400;">Add-ins</div>
<svg style="position:absolute;left:1338px;top:161px;" width="12" height="7" viewBox="0 0 12 7"><path d="M0.5 0.5 L6 6 L11.5 0.5" fill="none" stroke="#333" stroke-width="1.1"/></svg>
<svg style="position:absolute;left:0;top:0" width="1365" height="730" viewBox="0 0 1365 730"><path d="M456.9 344.4 L365.0 363.8" stroke="#ff0000" stroke-width="3.0" stroke-linecap="round" fill="none"/><path d="M352.8 366.4 L366.1 359.0 L365.0 363.8 L367.9 367.8 Z" fill="#ff0000"/><path d="M510.0 514.9 L331.6 488.4" stroke="#ff0000" stroke-width="3.0" stroke-linecap="round" fill="none"/><path d="M319.2 486.6 L334.2 484.3 L331.6 488.4 L332.9 493.2 Z" fill="#ff0000"/><path d="M994.2 348.6 L826.3 337.1" stroke="#ff0000" stroke-width="3.0" stroke-linecap="round" fill="none"/><path d="M813.8 336.2 L828.6 332.7 L826.3 337.1 L828.0 341.7 Z" fill="#ff0000"/><path d="M821.5 532.5 L727.2 430.2" stroke="#ff0000" stroke-width="3.0" stroke-linecap="round" fill="none"/><path d="M718.7 421.0 L731.8 428.6 L727.2 430.2 L725.2 434.7 Z" fill="#ff0000"/><path d="M543.8 594.6 L375.7 593.4" stroke="#ff0000" stroke-width="3.0" stroke-linecap="round" fill="none"/><path d="M363.2 593.3 L377.7 588.9 L375.7 593.4 L377.7 597.9 Z" fill="#ff0000"/><path d="M631.8 633.7 L374.6 653.1" stroke="#ff0000" stroke-width="3.0" stroke-linecap="round" fill="none"/><path d="M362.1 654.0 L376.2 648.4 L374.6 653.1 L376.9 657.4 Z" fill="#ff0000"/><path d="M432.3 707.6 L287.2 676.2" stroke="#ff0000" stroke-width="3.0" stroke-linecap="round" fill="none"/><path d="M275.0 673.6 L290.1 672.3 L287.2 676.2 L288.2 681.1 Z" fill="#ff0000"/></svg>
</body></html>
